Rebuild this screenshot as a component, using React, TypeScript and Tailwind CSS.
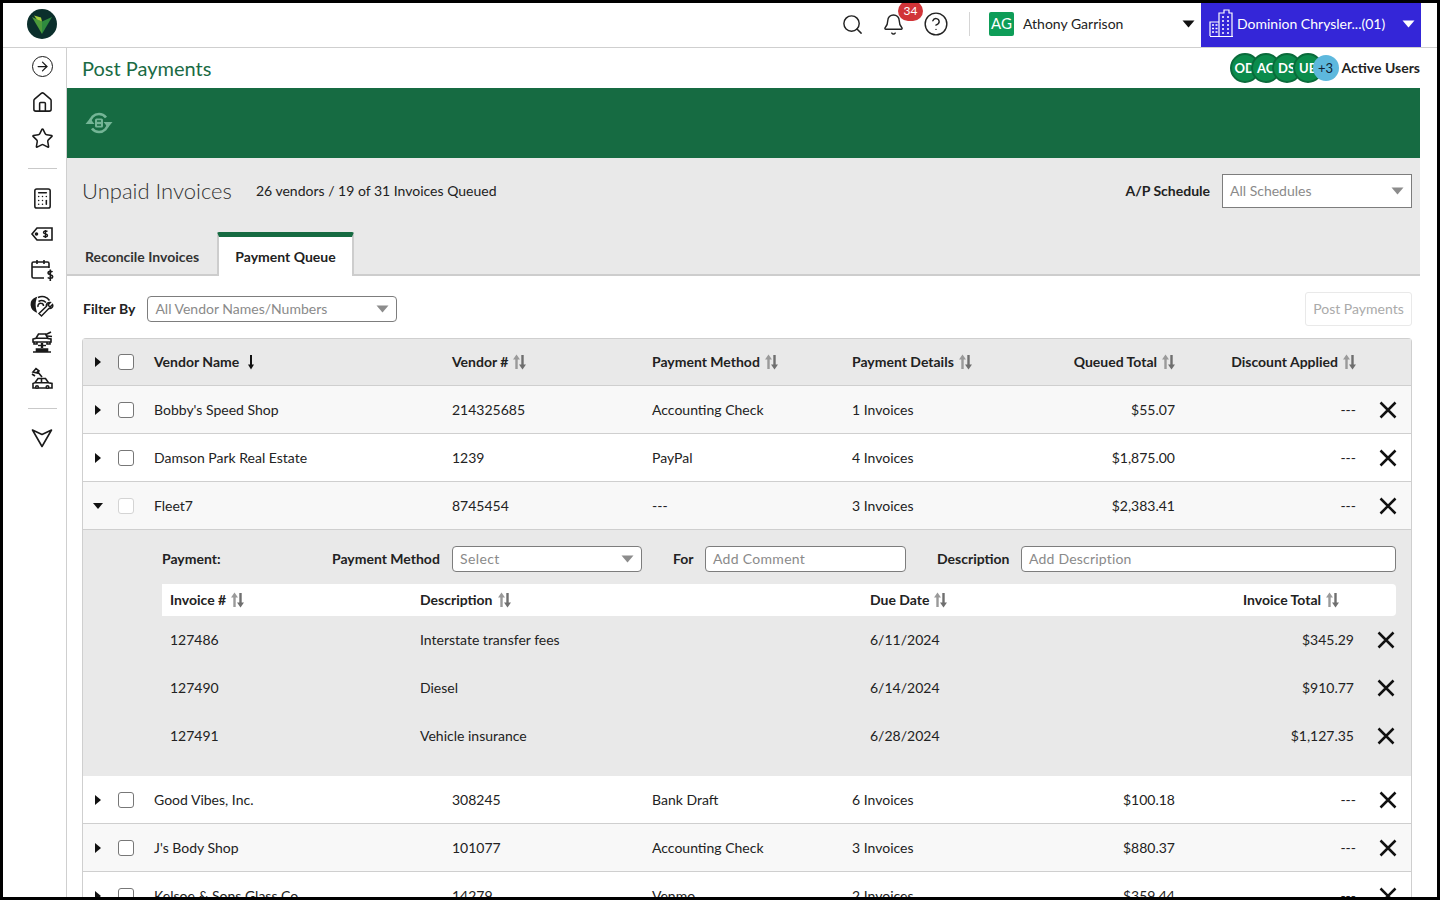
import React from 'react';
import { ArrowRight, Calculator, Home, Search, Bell, CircleHelp, Star } from 'lucide-react';

const vendorGrid = "grid grid-cols-[35px_36px_298px_200px_200px_200px_123px_181px_1fr] items-center";
const invoiceGrid = "grid grid-cols-[250px_450px_300px_184px_42px] items-center";

const vendorsTop = [
  { name: "Bobby's Speed Shop", num: "214325685", method: "Accounting Check", details: "1 Invoices", total: "$55.07", bg: "bg-[#f8f8f8]" },
  { name: "Damson Park Real Estate", num: "1239", method: "PayPal", details: "4 Invoices", total: "$1,875.00", bg: "bg-white" },
];

const vendorsBottom = [
  { name: "Good Vibes, Inc.", num: "308245", method: "Bank Draft", details: "6 Invoices", total: "$100.18", bg: "bg-white" },
  { name: "J's Body Shop", num: "101077", method: "Accounting Check", details: "3 Invoices", total: "$880.37", bg: "bg-[#f8f8f8]" },
  { name: "Kelsoe & Sons Glass Co.", num: "14279", method: "Venmo", details: "2 Invoices", total: "$359.44", bg: "bg-white" },
];

const invoices = [
  { id: "127486", desc: "Interstate transfer fees", due: "6/11/2024", total: "$345.29" },
  { id: "127490", desc: "Diesel", due: "6/14/2024", total: "$910.77" },
  { id: "127491", desc: "Vehicle insurance", due: "6/28/2024", total: "$1,127.35" },
];

const Sort = () => (
  <svg width="13" height="16" viewBox="0 0 13 16" className="ml-[5px] shrink-0">
    <path d="M3.5 15V4" stroke="#9a9a9a" strokeWidth="2.4" />
    <path d="M0 5.500 3.500 0.500 7 5.500Z" fill="#9a9a9a" />
    <path d="M9.500 1V11" stroke="#6f6f6f" strokeWidth="2.400" />
    <path d="M6 10.500 9.500 15.500 13 10.500Z" fill="#6f6f6f" />
  </svg>
);

const Caret = ({ open }: { open?: boolean }) => (
  <svg width="12" height="12" viewBox="0 0 12 12" className="ml-[9px]">
    {open ? <path d="M1 3h10L6 9Z" fill="#111" /> : <path d="M3 1v10l6-5Z" fill="#111" />}
  </svg>
);

const Box = ({ faded }: { faded?: boolean }) => (
  <div className={`w-4 h-4 rounded-[3px] border bg-white ${faded ? "border-[#d4d4d4]" : "border-[#777]"}`} />
);

const Tri = ({ color = "#8c8c8c" }: { color?: string }) => (
  <svg width="13" height="8" viewBox="0 0 13 8"><path d="M0.5 0.5h12L6.5 7.5Z" fill={color} /></svg>
);

const Select = ({ text, className }: { text: string; className: string }) => (
  <div className={`flex items-center justify-between bg-white border border-[#7d7d7d] px-[7px] text-[#8a8a8a] ${className}`}>
    <span>{text}</span>
    <Tri />
  </div>
);

const Cross = () => (
  <svg width="18" height="18" viewBox="0 0 18 18">
    <path d="M1.500 1.500 16.500 16.500M16.500 1.500 1.500 16.500" stroke="#111" strokeWidth="2.500" />
  </svg>
);

const VendorRow = ({ row, open }: { row: { name: string; num: string; method: string; details: string; total: string; bg: string }; open?: boolean }) => (
  <div className={`${vendorGrid} h-12 border-b border-[#cfcfcf] ${row.bg}`}>
    <Caret open={open} />
    <Box faded={open} />
    <span>{row.name}</span>
    <span>{row.num}</span>
    <span>{row.method}</span>
    <span>{row.details}</span>
    <span className="text-right">{row.total}</span>
    <span className="text-right">---</span>
    <div className="flex justify-end pr-[14px]"><Cross /></div>
  </div>
);

const Avatar = ({ text }: { text: string }) => (
  <div className="w-[30px] h-[30px] -ml-[9px] first:ml-0 rounded-full bg-[#0b8c4c] border-2 border-[#0a6b3b] text-white text-[13px] font-bold flex items-center justify-center overflow-hidden">
    {text}
  </div>
);

const Slot = ({ children }: { children: React.ReactNode }) => (
  <div className="h-9 w-full flex items-center justify-center">{children}</div>
);

const SideRule = () => (
  <div className="h-6 w-full flex items-center justify-center"><div className="w-[29px] h-px bg-[#c9c9c9]" /></div>
);

const Logo = () => (
  <svg width="30" height="30" viewBox="0 0 30 30">
    <circle cx="15" cy="15" r="15" fill="#0b2f2c" />
    <path d="M5 8 15 12.500 15 25Z" fill="#4d9b3a" />
    <path d="M25 8 15 12.500 15 25Z" fill="#2f8a3e" />
    <path d="M7 6.500 14 8.500 15 12.500 10 10.500Z" fill="#a6cf3e" />
  </svg>
);

const TagIcon = () => (
  <svg width="24" height="24" viewBox="0 0 24 24" fill="none" stroke="#1a1a1a" strokeWidth="1.600">
    <path d="M7 6h15v12H7L2 12Z" />
    <circle cx="6.500" cy="12" r="1" fill="#1a1a1a" />
    <path d="M17.500 9.500c-.8-.8-4-.9-4 .9 0 2 4 1 4 3 0 1.700-3.200 1.700-4.200.7M15.500 8v8" strokeWidth="1.400" />
  </svg>
);

const CalendarMoney = () => (
  <svg width="24" height="24" viewBox="0 0 24 24" fill="none" stroke="#1a1a1a" strokeWidth="1.600">
    <path d="M14 20H3.500a1.500 1.500 0 0 1-1.500-1.500V5.500A1.500 1.500 0 0 1 3.500 4h14A1.500 1.500 0 0 1 19 5.500V10M2 9h17M7 2v4M14 2v4" />
    <path d="M22.500 14c-1-1-4.500-1-4.500 1 0 2.300 4.700 1.300 4.700 3.700 0 2-3.700 2-5 .8M20.300 11.500V23" />
  </svg>
);

const BrakeIcon = () => (
  <svg width="24" height="24" viewBox="0 0 24 24" fill="none" stroke="#1a1a1a" strokeWidth="1.500">
    <path d="M6 4C2 5.500 1 9 1.500 12c.4 2.500 2 4.500 4.500 5.500C4.500 13 4.500 8.500 6 4Z" fill="#1a1a1a" />
    <path d="M8 3.500c4-2 9-1 11.500 3M8.500 7.500c2.500-1.500 5.500-1 7.500 1M8 13c-.5-2 1-4 3-3.800 1.500.1 2.500 1.300 2.500 2.800" />
    <path d="M22.500 10.500 20 13l-2-2 2.300-2.500c-2.300-.5-4.500 1.300-3.800 3.800L9 19.500l2.500 2.500 7.300-7.500c2.700.5 4.700-1.700 3.700-4Z" fill="#fff" />
  </svg>
);

const LiftIcon = () => (
  <svg width="24" height="24" viewBox="0 0 24 24" fill="none" stroke="#1a1a1a" strokeWidth="1.600">
    <path d="M3 12V9l3-.8L8.500 4h7l2.500 4.500 3 .5v3H3ZM6 8.200h12" />
    <path d="M4 12v2h3v-2M17 12v2h3v-2M16 4.500 21 2M17 6l5 .5" />
    <path d="M12 13v5" strokeWidth="2.400" />
    <path d="M8 15.500h8" strokeWidth="1.400" />
    <path d="M6.500 19h11v2.500h-11ZM3 22h18" fill="#1a1a1a" />
  </svg>
);

const CarRepair = () => (
  <svg width="24" height="24" viewBox="0 0 24 24" fill="none" stroke="#1a1a1a" strokeWidth="1.600">
    <path d="M3 22v-4.500l2-.8 3-4.200h7.500l3 4.200 3.500.8V22H3ZM5 16.700h13.500M11.500 12.500v4" />
    <circle cx="7" cy="21" r="1.300" fill="#fff" />
    <circle cx="17.500" cy="21" r="1.300" fill="#fff" />
    <path d="M3 6l3-3.500 3 2.500-1.500 2ZM7 5l5 6M2 8l3 2" />
  </svg>
);

const VendorMark = () => (
  <svg width="22" height="20" viewBox="0 0 22 20" fill="none" stroke="#1a1a1a" strokeWidth="1.600">
    <path d="M1.500 2 11 6.500 20.500 2 11 18.500Z" strokeLinejoin="round" />
  </svg>
);

const Building = () => (
  <svg width="25" height="30" viewBox="0 0 25 30" fill="none" stroke="#fff" strokeWidth="1.200">
    <path d="M1 27V13h9v14M10 27V4h5V1h5v3h3v23M1 27.500h23" />
    <path d="M3 16h2M6.500 16h2M3 19.500h2M6.500 19.500h2M3 23h2M6.500 23h2M13 8h2M18 8h2M13 12h2M18 12h2M13 16h2M18 16h2M13 20h2M18 20h2M13 24h2M18 24h2" strokeWidth="1.500" />
  </svg>
);

const SyncMark = () => (
  <svg width="28" height="24" viewBox="0 0 28 24" fill="none" stroke="#74b596" strokeWidth="2.600">
    <path d="M5 12c0-5 4-9 9-9 3 0 5.500 1.500 7 3.500M23 12c0 5-4 9-9 9-3 0-5.500-1.500-7-3.500" />
    <path d="M0.500 13 5 7.500 9.500 13ZM18.500 11 23 16.500 27.500 11Z" fill="#74b596" stroke="none" />
    <rect x="10" y="7.500" width="8" height="9" rx="1.500" fill="#74b596" stroke="none" />
    <path d="M12 10h4M12 14h4" stroke="#166b42" strokeWidth="1.500" />
  </svg>
);

export default function App() {
  return (
    <div className="h-[900px] w-[1440px] overflow-hidden border-[3px] border-black bg-white text-sm text-[#222] [font-family:Lato,sans-serif]">
      {/* Top bar */}
      <header className="h-[45px] flex items-center border-b border-[#cfcfcf] pr-4">
        <div className="ml-6 mb-[2px] w-[30px] h-[30px]"><Logo /></div>
        <div className="ml-auto flex items-center h-full">
          <Search size={23} strokeWidth={1.5} className="mb-[2px] text-[#222]" />
          <div className="relative ml-[18px] mb-[2px]">
            <Bell size={23} strokeWidth={1.5} className="text-[#222]" />
            <span className="absolute -top-[12px] left-[16px] w-[25px] h-5 rounded-full bg-[#d13438] text-white text-xs flex items-center justify-center">34</span>
          </div>
          <CircleHelp size={26} strokeWidth={1.3} className="ml-[18px] mb-[2px] text-[#222]" />
          <div className="w-px h-6 bg-[#d5d5d5] ml-5 mb-[2px]" />
          <div className="ml-[19px] mb-[2px] w-[25px] h-6 rounded-[2px] bg-[#0e9d58] text-white text-[15px] flex items-center justify-center">AG</div>
          <span className="ml-[9px] mb-[2px] w-[159px]">Athony Garrison</span>
          <div className="mb-[2px] flex"><Tri color="#111" /></div>
          <div className="ml-[6px] w-[220px] h-full bg-[#3426d8] text-white flex items-center pl-2 pb-[2px]">
            <Building />
            <span className="ml-[3px] w-[165px]">Dominion Chrysler...(01)</span>
            <Tri color="#fff" />
          </div>
        </div>
      </header>

      <div className="flex">
        {/* Side rail */}
        <aside className="w-16 h-[850px] shrink-0 border-r border-[#cfcfcf] flex flex-col items-center pl-[15px] text-[#1a1a1a]">
          <Slot><div className="w-[21px] h-[21px] flex items-center justify-center rounded-full border-[1.8px] border-[#1a1a1a]"><ArrowRight size={15} strokeWidth={2} /></div></Slot>
          <Slot><Home size={23} strokeWidth={1.6} /></Slot>
          <Slot><Star size={23} strokeWidth={1.6} /></Slot>
          <SideRule />
          <Slot><Calculator size={23} strokeWidth={1.6} /></Slot>
          <Slot><TagIcon /></Slot>
          <Slot><CalendarMoney /></Slot>
          <Slot><BrakeIcon /></Slot>
          <Slot><LiftIcon /></Slot>
          <Slot><CarRepair /></Slot>
          <SideRule />
          <Slot><VendorMark /></Slot>
        </aside>

        {/* Main */}
        <main className="w-[1353px] shrink-0">
          <div className="h-10 flex items-center justify-between pl-[15px]">
            <h1 className="text-xl text-[#1a6b44]">Post Payments</h1>
            <div className="flex items-center">
              <Avatar text="OD" />
              <Avatar text="AC" />
              <Avatar text="DS" />
              <Avatar text="UE" />
              <div className="w-[26px] h-[26px] -ml-[10px] rounded-full bg-[#5db8dd] text-[#123] text-[13px] flex items-center justify-center">+3</div>
              <span className="ml-[3px] font-bold text-[#222]">Active Users</span>
            </div>
          </div>

          <div className="h-[70px] bg-[#166b42] flex items-center pl-[18px]"><SyncMark /></div>

          <div className="h-[118px] bg-[#e9e9e9] border-b-2 border-[#cdcdcd] flex flex-col">
            <div className="flex items-center pl-[15px] pr-2 pt-4">
              <h2 className="text-[22px] font-light text-[#333]">Unpaid Invoices</h2>
              <span className="ml-6">26 vendors / 19 of 31 Invoices Queued</span>
              <span className="ml-auto font-bold">A/P Schedule</span>
              <Select text="All Schedules" className="ml-3 w-[190px] h-[34px]" />
            </div>
            <div className="flex items-end mt-auto pl-[18px] -mb-[2px]">
              <div className="h-[39px] w-[132px] flex items-center font-bold text-[#333]">Reconcile Invoices</div>
              <div className="h-11 w-[137px] bg-white border-x-2 border-[#cdcdcd] border-t-[5px] border-t-[#166b42] rounded-t-[2px] flex items-center justify-center font-bold">Payment Queue</div>
            </div>
          </div>

          <div className="flex items-center justify-between h-[62px] pt-1 pl-4 pr-2">
            <div className="flex items-center">
              <span className="font-bold">Filter By</span>
              <Select text="All Vendor Names/Numbers" className="ml-3 w-[250px] h-[26px] rounded-[4px]" />
            </div>
            <div className="h-[34px] w-[107px] border border-[#e9e9e9] rounded-[3px] text-[#aaa] flex items-center justify-center">Post Payments</div>
          </div>

          {/* Vendor table */}
          <div className="ml-[15px] w-[1330px] border-x border-t border-[#cfcfcf] rounded-t-[4px]">
            <div className={`${vendorGrid} h-[47px] bg-[#e9e9e9] border-b border-[#cfcfcf] font-bold`}>
              <Caret />
              <Box />
              <div className="flex items-center">Vendor Name
                <svg width="8" height="15" viewBox="0 0 8 15" className="ml-2"><path d="M4 0v10" stroke="#111" strokeWidth="2" /><path d="M1 9.500h6L4 14.500Z" fill="#111" /></svg>
              </div>
              <div className="flex items-center">Vendor #<Sort /></div>
              <div className="flex items-center">Payment Method<Sort /></div>
              <div className="flex items-center">Payment Details<Sort /></div>
              <div className="flex items-center justify-end">Queued Total<Sort /></div>
              <div className="flex items-center justify-end">Discount Applied<Sort /></div>
              <div />
            </div>

            {vendorsTop.map(row => <VendorRow key={row.name} row={row} />)}
            <VendorRow open row={{ name: "Fleet7", num: "8745454", method: "---", details: "3 Invoices", total: "$2,383.41", bg: "bg-[#f8f8f8]" }} />

            {/* Expanded invoices */}
            <div className="bg-[#e9e9e9] pl-[79px] pr-[15px] pt-4 pb-4">
              <div className="flex items-center h-[26px]">
                <span className="w-[170px] font-bold">Payment:</span>
                <span className="w-[108px] font-bold whitespace-nowrap">Payment Method</span>
                <Select text="Select" className="ml-3 w-[190px] h-[26px] rounded-[4px] tracking-[0.4px]" />
                <span className="ml-[31px] w-8 font-bold">For</span>
                <div className="w-[201px] h-[26px] bg-white border border-[#7d7d7d] rounded-[4px] px-[7px] flex items-center text-[#8a8a8a] tracking-[0.3px]">Add Comment</div>
                <span className="ml-[31px] w-[84px] font-bold">Description</span>
                <div className="flex-1 h-[26px] bg-white border border-[#7d7d7d] rounded-[4px] px-[7px] flex items-center text-[#8a8a8a] tracking-[0.2px]">Add Description</div>
              </div>

              <div className={`${invoiceGrid} mt-3 h-8 pl-2 bg-white rounded-r-[4px] font-bold`}>
                <div className="flex items-center">Invoice #<Sort /></div>
                <div className="flex items-center">Description<Sort /></div>
                <div className="flex items-center">Due Date<Sort /></div>
                <div className="flex items-center justify-end pr-[15px]">Invoice Total<Sort /></div>
                <div />
              </div>

              {invoices.map(inv => (
                <div key={inv.id} className={`${invoiceGrid} h-12 pl-2`}>
                  <span>{inv.id}</span>
                  <span>{inv.desc}</span>
                  <span>{inv.due}</span>
                  <span className="text-right">{inv.total}</span>
                  <div className="flex justify-end pr-px"><Cross /></div>
                </div>
              ))}
            </div>

            {vendorsBottom.map(row => <VendorRow key={row.name} row={row} />)}
          </div>
        </main>
      </div>
    </div>
  );
}
